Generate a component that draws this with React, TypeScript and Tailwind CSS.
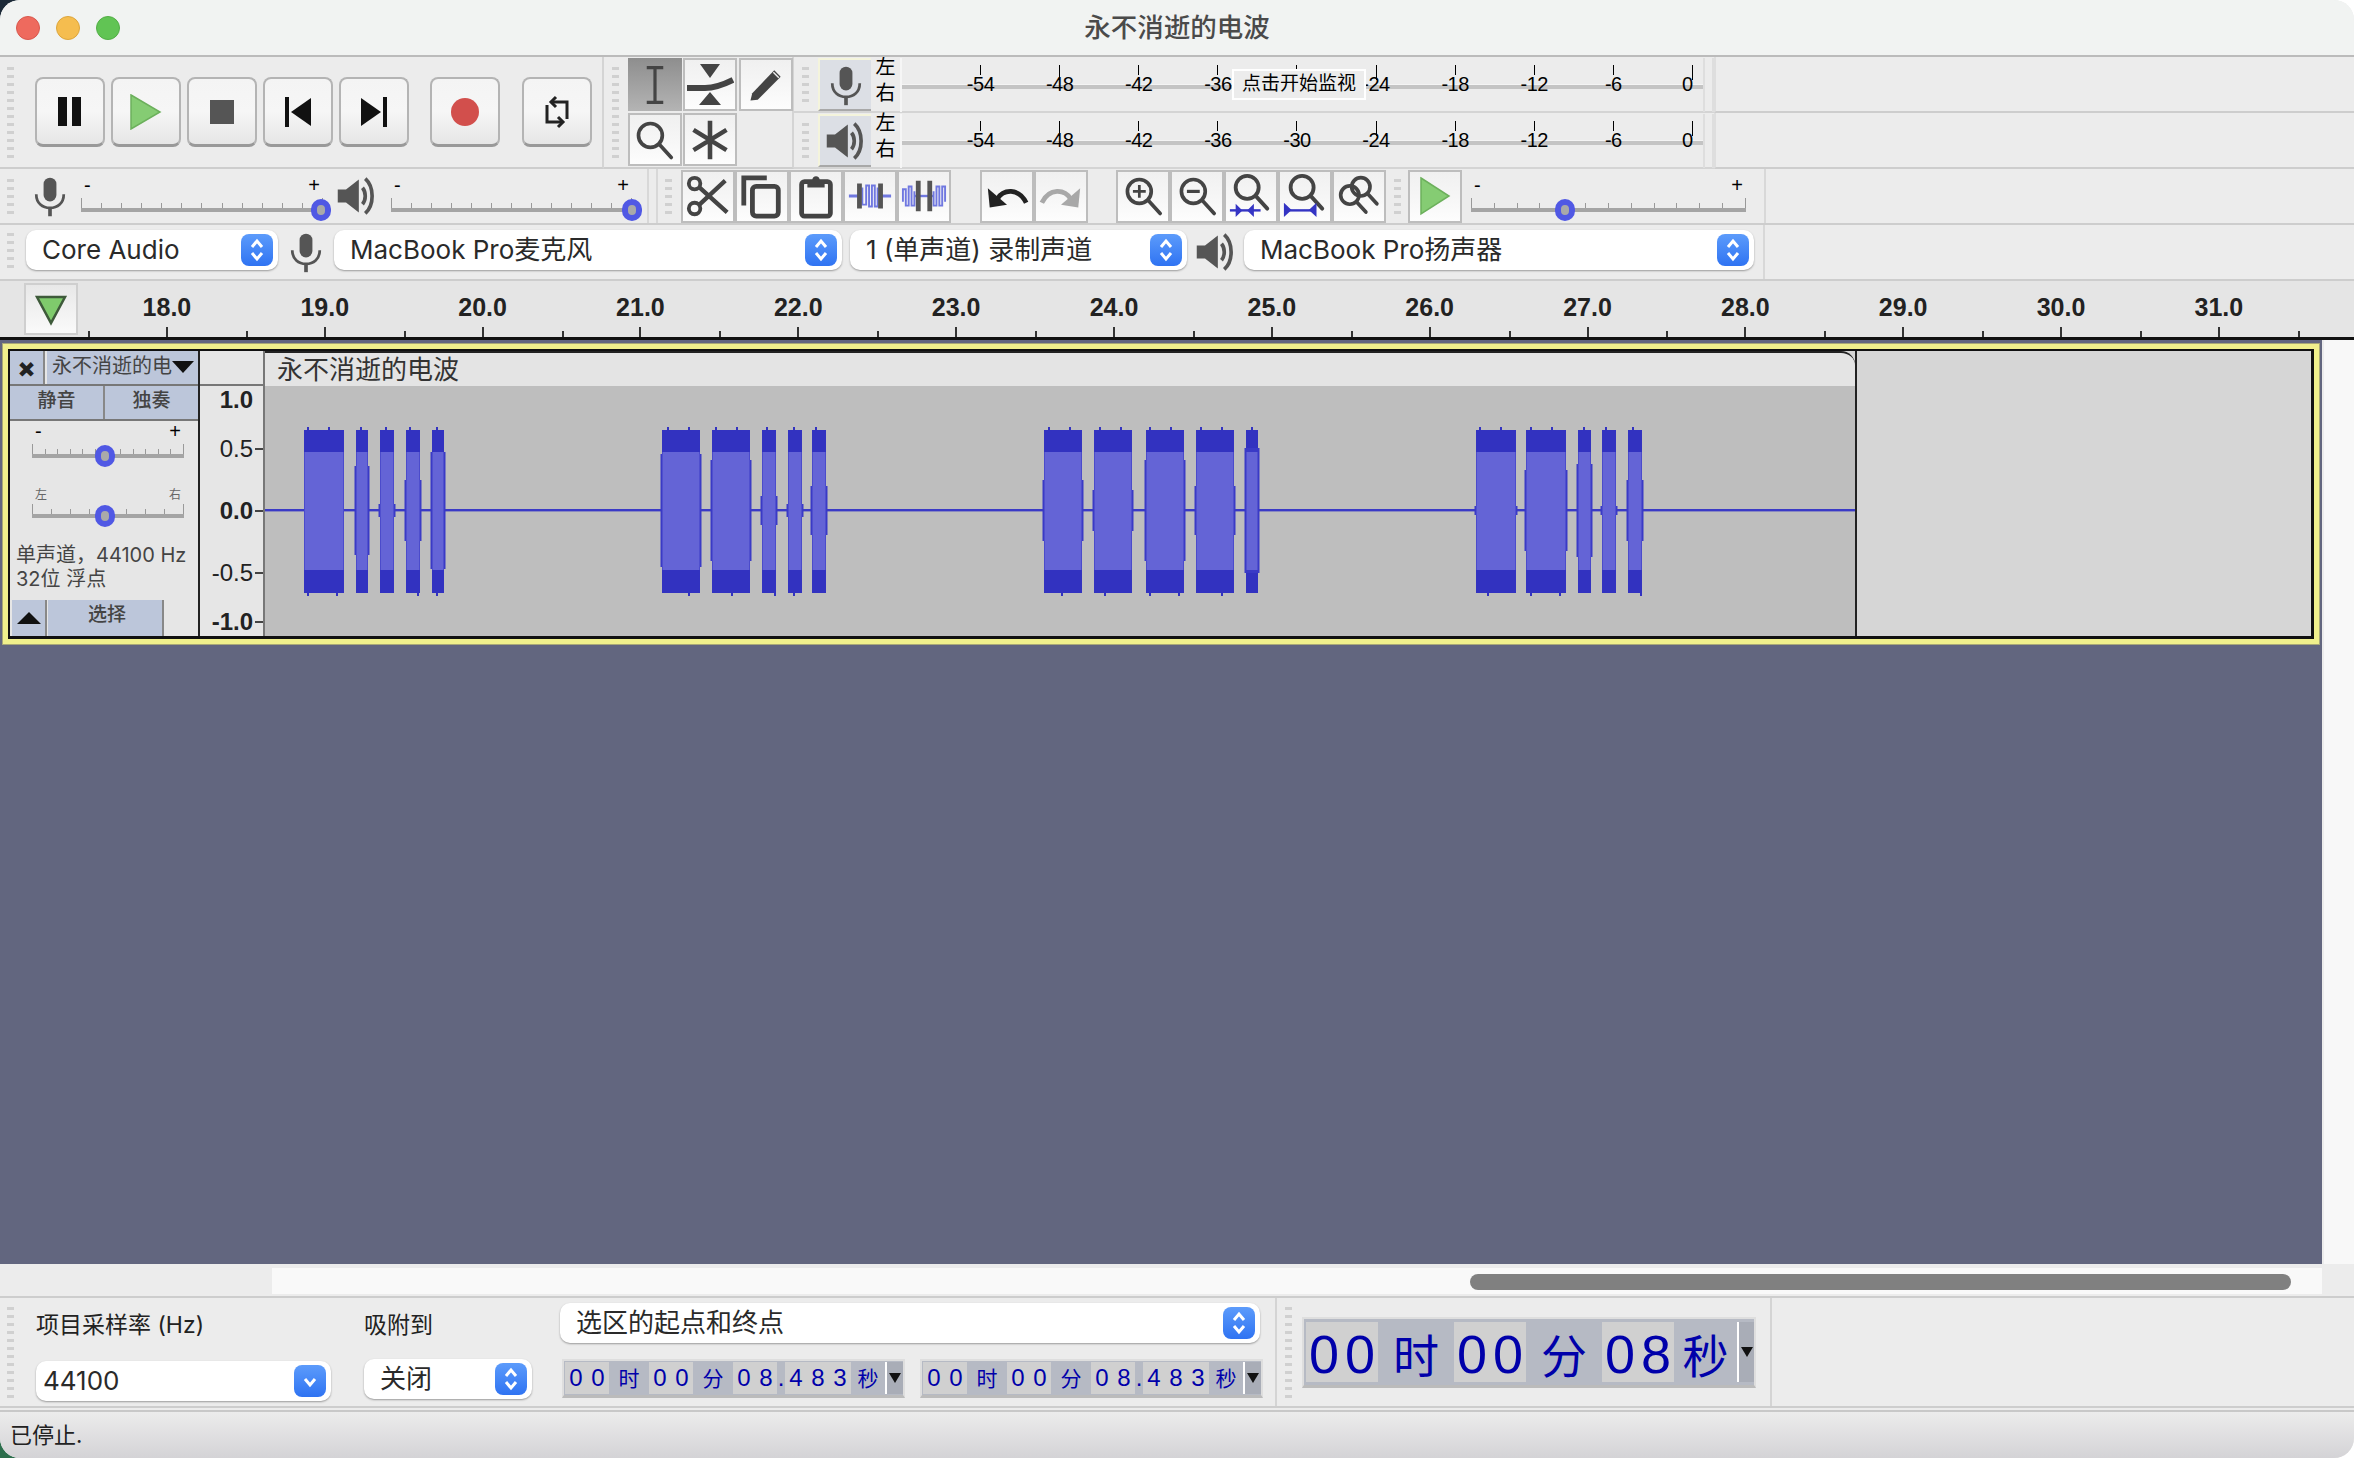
import type { ReactNode } from 'react'

const SANS = "font-['Inter','Noto_Sans_CJK_SC',sans-serif]"
const ARIAL = "font-['Liberation_Sans','Noto_Sans_CJK_SC',sans-serif]"

function Grip({ count }: { count: number }) {
  return (
    <div className="flex flex-col gap-[5px] shrink-0">
      {Array.from({ length: count }).map((_, i) => (
        <div key={i} className="w-[7px] h-[3px] bg-[#d0d0d0]" />
      ))}
    </div>
  )
}

function Icon({ size = 48, children }: { size?: number; children: ReactNode }) {
  return (
    <svg width={size} height={size} viewBox="0 0 48 48" fill="none">
      {children}
    </svg>
  )
}

const InkStroke = { stroke: '#444', strokeWidth: 4, strokeLinecap: 'round' as const }

function MicIcon() {
  return (
    <Icon size={44}>
      <rect x="17" y="4" width="14" height="26" rx="7" fill="#555" />
      <path d="M9 22c0 10 7 15 15 15s15-5 15-15" stroke="#555" strokeWidth="3" />
      <path d="M24 37v9" stroke="#555" strokeWidth="4" />
    </Icon>
  )
}

function SpeakerIcon() {
  return (
    <Icon size={44}>
      <path d="M3 17h9L26 6v36L12 31H3z" fill="#555" />
      <path d="M30 15c4 5 4 13 0 18" stroke="#555" strokeWidth="4" />
      <path d="M33 5c10 9 10 29 0 38" stroke="#555" strokeWidth="4" />
    </Icon>
  )
}

function ZoomGlass({ cx = 20, cy = 19, r = 13 }: { cx?: number; cy?: number; r?: number }) {
  return (
    <>
      <circle cx={cx} cy={cy} r={r} stroke="#444" strokeWidth="4" />
      <path d={`M${cx + r * 0.72} ${cy + r * 0.72}L${cx + r * 1.75} ${cy + r * 1.85}`} {...InkStroke} />
    </>
  )
}

function TransportButton({ children }: { children: ReactNode }) {
  return (
    <button className="w-[70px] h-[70px] shrink-0 flex items-center justify-center rounded-[8px] border-2 border-[#b4b4b4] border-b-[3px] border-b-[#999] bg-gradient-to-b from-[#f4f4f4] via-[#f6f6f6] to-[#e6e6e6]">
      {children}
    </button>
  )
}

function ToolButton({ active, children }: { active?: boolean; children: ReactNode }) {
  return (
    <button
      className={
        active
          ? 'w-[54px] h-[53px] shrink-0 flex items-center justify-center bg-gradient-to-b from-[#8e8e8e] to-[#b4b4b4]'
          : 'w-[54px] h-[53px] shrink-0 flex items-center justify-center border-2 border-[#bdbdbd] bg-gradient-to-b from-[#f0f0f0] via-[#f6f6f6] to-[#fdfdfd]'
      }
    >
      {children}
    </button>
  )
}

function Slider({ width, thumb, left = '-', right = '+', small }: { width: string; thumb: number; left?: string; right?: string; small?: boolean }) {
  return (
    <div className={`${width} shrink-0 flex flex-col`}>
      <div className={`flex justify-between px-[3px] ${small ? 'h-[18px] text-[12px] text-[#666]' : 'h-[22px] text-[20px] text-black'} leading-[18px] ${ARIAL}`}>
        <span>{left}</span>
        <span>{right}</span>
      </div>
      <div className="flex justify-between items-end h-[10px]">
        {Array.from({ length: small ? 9 : 13 }).map((_, i, all) => (
          <div key={i} className={`w-[1px] bg-[#999] ${i === 0 || i === all.length - 1 ? 'h-[10px]' : 'h-[5px]'}`} />
        ))}
      </div>
      <div className="relative h-[4px] bg-[#a4a4a4]">
        <div
          className="absolute top-[-9px] w-[20px] h-[22px] -ml-[10px] rounded-full border-[6px] border-[#5058e4] bg-[#a9a9a9]"
          style={{ left: `${thumb}%` }}
        />
      </div>
    </div>
  )
}

function Select({ width, label, single, className = '' }: { width: string; label: string; single?: boolean; className?: string }) {
  return (
    <div className={`${width} ${className} ${single ? 'pl-[7px]' : 'pl-[16px]'} h-[40px] shrink-0 flex items-center justify-between pr-[5px] rounded-[10px] bg-white shadow-[0_1px_2px_rgba(0,0,0,0.35)]`}>
      <span className={`${SANS} text-[26px] text-[#2a2a2a] whitespace-nowrap leading-none`}>{label}</span>
      <span className="w-[32px] h-[32px] flex items-center justify-center rounded-[8px] bg-gradient-to-b from-[#5c9bfb] to-[#2f73f2]">
        <svg width="18" height="26" viewBox="0 0 18 26" fill="none" stroke="white" strokeWidth="3">
          {!single && <path d="M4 10l5-6 5 6" />}
          <path d={single ? 'M4 11l5 6 5-6' : 'M4 16l5 6 5-6'} />
        </svg>
      </span>
    </div>
  )
}

function Meter({ icon, hint }: { icon: ReactNode; hint?: boolean }) {
  const ticks = ['-54', '-48', '-42', '-36', '-30', '-24', '-18', '-12', '-6', '0']
  return (
    <div className="h-[56px] flex items-start pt-[1px] border-b-2 border-[#d4d4d4] box-border">
      <div className="w-[24px] pl-[8px] pt-[9px]">
        <Grip count={5} />
      </div>
      <div className="w-[53px] h-[53px] flex items-center justify-center bg-[#dcdfe5] border-t-2 border-l-2 border-[#f4f4dc] border-b-2 border-b-[#a8a8a8]">
        {icon}
      </div>
      <div className={`w-[29px] -mt-[1px] flex flex-col items-center gap-[6px] text-[20px] leading-[20px] text-black ${SANS}`}>
        <span>左</span>
        <span>右</span>
      </div>
      <div className="relative w-[803px] h-[54px] border-l-2 border-[#f6f6f6] pl-[39px] flex overflow-hidden">
        <div className="absolute left-0 right-0 top-[26px] h-[5px] bg-[#c4c4c4] border-t border-[#f4f4f4]" />
        {ticks.map(t => {
          const long = t === '-48' || t === '-24' || t === '0'
          return (
            <div key={t} className={`relative w-[79.1px] shrink-0 flex flex-col items-center pt-[7px] ${ARIAL}`}>
              <div className={`w-[1px] bg-black ${long ? 'h-[15px]' : 'h-[10px]'}`} />
              {!(hint && t === '-30') && (
                <span className={`${long ? '-mt-[6px]' : '-mt-[1px]'} ${t === '0' ? '-ml-[10px]' : ''} text-[20px] leading-[20px] text-black tracking-[-0.5px]`}>{t}</span>
              )}
            </div>
          )
        })}
        {hint && (
          <div className={`absolute left-[330px] top-[11px] w-[134px] h-[31px] flex items-center justify-center border-2 border-white bg-[#ececec] text-[19px] text-black ${SANS}`}>
            点击开始监视
          </div>
        )}
      </div>
      <div className="w-[11px] h-[54px] border-x-2 border-[#dedede]" />
    </div>
  )
}

function Ruler() {
  const seconds = Array.from({ length: 14 }, (_, i) => 18 + i)
  return (
    <div className="h-[59px] shrink-0 flex bg-[#e5e5e5] border-b-[3px] border-[#111] pl-[24px] overflow-hidden">
      <div className="w-[54px] h-[52px] mt-[2px] flex items-center justify-center border-2 border-[#cfcfcf] bg-gradient-to-b from-[#e8e8e8] to-[#fafafa]">
        <svg width="34" height="34" viewBox="0 0 34 34">
          <path d="M3 5h28L17 31z" fill="#7fcb6c" stroke="#3e5a3a" strokeWidth="2.5" />
        </svg>
      </div>
      <div className="ml-[10px] flex">
        {seconds.map(s => (
          <div key={s} className="relative w-[157.85px] shrink-0 flex flex-col items-center justify-end">
            <div className="absolute left-0 bottom-0 w-[2px] h-[6px] bg-[#333]" />
            <span className={`${ARIAL} font-bold text-[25px] leading-none text-[#222] mb-[7px]`}>{s}.0</span>
            <div className="w-[2px] h-[10px] bg-[#333]" />
          </div>
        ))}
        <div className="relative w-[2px] shrink-0">
          <div className="absolute left-0 bottom-0 w-[2px] h-[6px] bg-[#333]" />
        </div>
      </div>
    </div>
  )
}

// x start, x end, how far the side fringes reach above/below the centre line
const BLOCKS: [number, number, number][] = [
  [304, 344, 0], [356, 368, 44], [380, 394, 6], [406, 420, 30], [432, 444, 58],
  [662, 700, 56], [712, 750, 50], [762, 776, 14], [788, 802, 6], [812, 826, 24],
  [1044, 1082, 30], [1094, 1132, 20], [1146, 1184, 50], [1196, 1234, 24], [1246, 1258, 62],
  [1476, 1516, 4], [1526, 1566, 40], [1578, 1591, 46], [1602, 1616, 4], [1628, 1642, 30],
]

function Waveform() {
  return (
    <svg width="1590" height="250" viewBox="265 386 1590 250" className="block">
      <rect x="265" y="386" width="1590" height="250" fill="#bebebe" />
      <rect x="265" y="509" width="1590" height="2.4" fill="#3a3ac6" />
      {BLOCKS.map(([a, b, fringe], i) => {
        const w = b - a
        const notches = Array.from({ length: Math.floor(w / 7) }, (_, n) => a + 3 + n * 7 + ((i + n) % 3))
        return (
          <g key={a}>
            <rect x={a} y="430" width={w} height="163" fill="#3232c0" />
            {notches.map((x, n) =>
              (i * 3 + n) % 3 === 0 ? <rect key={n} x={x} y={427} width="2" height="4" fill="#3232c0" /> : null,
            )}
            {notches.map((x, n) =>
              (i * 5 + n) % 4 === 0 ? <rect key={n} x={x} y={592} width="2" height="4" fill="#3232c0" /> : null,
            )}
            <rect x={a - 1.5} y={510 - fringe} width={w + 3} height={fringe * 2 + 1} fill="#3a3ac6" />
            <rect x={a + 0.5} y="452" width={w - 1} height="118" fill="#6464d6" />
          </g>
        )
      })}
    </svg>
  )
}

function TrackPanel() {
  const blueBtn = 'bg-[#bcc6da] flex items-center justify-center'
  return (
    <div className={`w-[190px] shrink-0 flex flex-col bg-[#e6e6e6] border-r-2 border-[#222] ${SANS}`}>
      <div className="h-[35px] flex border-b-2 border-[#777]">
        <div className={`w-[35px] ${blueBtn} border-r-2 border-[#888] text-[26px] font-black text-[#222] leading-none`}>×</div>
        <div className={`flex-1 ml-[2px] ${blueBtn} justify-between pl-[2px] pr-[1px] text-[20px] text-[#444]`}>
          <span className="whitespace-nowrap pb-[4px]">永不消逝的电</span>
          <svg width="22" height="13" viewBox="0 0 22 13"><path d="M0 0h22L11 12z" fill="#111" /></svg>
        </div>
      </div>
      <div className="h-[35px] flex border-b-2 border-[#777] text-[19px] font-medium text-[#444]">
        <div className={`w-[95px] ${blueBtn} border-r-2 border-[#888] pb-[2px]`}>静音</div>
        <div className={`flex-1 ${blueBtn} pb-[2px]`}>独奏</div>
      </div>
      <div className="flex-1 flex flex-col">
        <div className="mt-[1px] ml-[22px]">
          <Slider width="w-[152px]" thumb={48} />
        </div>
        <div className="mt-[28px] ml-[22px]">
          <Slider width="w-[152px]" thumb={48} left="左" right="右" small />
        </div>
        <div className="mt-[25px] ml-[6px] text-[20px] leading-[24px] text-[#444] whitespace-nowrap">
          <div>单声道，44100 Hz</div>
          <div>32位 浮点</div>
        </div>
      </div>
      <div className="h-[36px] flex border-t-0">
        <div className={`w-[35px] ml-[2px] ${blueBtn} border-r-2 border-[#888]`}>
          <svg width="24" height="12" viewBox="0 0 24 12"><path d="M12 0l12 12H0z" fill="#111" /></svg>
        </div>
        <div className={`w-[116px] ml-[1px] ${blueBtn} border-r-2 border-[#888] pb-[6px] pl-[4px] text-[19px] font-medium text-[#444]`}>选择</div>
      </div>
    </div>
  )
}

function Track() {
  const Scale = ({ label, tick, bold, className = '' }: { label: string; tick?: boolean; bold?: boolean; className?: string }) => (
    <div className={`h-[24px] flex items-center justify-end ${className}`}>
      <span className={`${ARIAL} text-[24px] leading-none text-[#222] ${bold ? 'font-bold' : ''}`}>{label}</span>
      <div className={`ml-[2px] w-[8px] h-[2px] ${tick ? 'bg-[#444]' : ''}`} />
    </div>
  )
  return (
    <div className="mt-[4px] mx-[3px] h-[300px] box-border border-[5px] border-[#f0f08c] shadow-[0_0_0_1px_#a8a878]">
      <div className="h-[290px] box-border flex border-[2px] border-b-[3px] border-r-[3px] border-[#111] bg-[#d6d6d6]">
        <TrackPanel />
        <div className="w-[65px] shrink-0 bg-[#e6e6e6] border-r-2 border-[#777]">
          <div className="h-[35px] border-b-2 border-[#777]" />
          <Scale label="1.0" bold className="mt-[2px]" />
          <Scale label="0.5" tick className="mt-[25px]" />
          <Scale label="0.0" tick bold className="mt-[38px]" />
          <Scale label="-0.5" tick className="mt-[38px]" />
          <Scale label="-1.0" tick bold className="mt-[25px]" />
        </div>
        <div className="w-[1592px] shrink-0 flex flex-col border-r-2 border-[#222]">
          <div className={`h-[35px] flex items-center pl-[12px] bg-[#e4e4e4] border-t-2 border-[#222] rounded-tr-[14px] text-[26px] text-[#333] ${SANS}`}>
            永不消逝的电波
          </div>
          <Waveform />
        </div>
        <div className="flex-1" />
      </div>
    </div>
  )
}

function Clock({ big }: { big?: boolean }) {
  const groups: [string, string][] = big
    ? [['00', '时'], ['00', '分'], ['08', '秒']]
    : [['00', '时'], ['00', '分'], ['08.483', '秒']]
  return (
    <div className={`flex shrink-0 bg-[#b6bac4] border-2 border-[#dedede] border-b-[3px] border-b-[#bbb] ${big ? 'w-[454px] h-[71px] py-[3px] pl-[2px]' : 'w-[343px] h-[39px] py-[1px] pl-[1px]'} ${ARIAL} text-[#0000aa]`}>
      {groups.map(([digits, unit]) => (
        <div key={unit} className="flex">
          <div className="flex items-center">
            {digits.split('').map((d, i) =>
              d === '.' ? (
                <span key={i} className="w-[8px] text-center text-[24px] leading-none">.</span>
              ) : (
                <span
                  key={i}
                  className={`h-full flex items-center justify-center bg-[#d0d0d0] ${big ? 'w-[36px] text-[54px] pt-[4px]' : 'w-[22px] text-[24px]'} leading-none`}
                >
                  {d}
                </span>
              ),
            )}
          </div>
          <div
            className={`flex items-center justify-center ${SANS} leading-none ${
              big
                ? unit === '秒' ? 'w-[63px] text-[46px] pt-[8px]' : 'w-[76px] text-[46px] pt-[8px]'
                : unit === '秒' ? 'w-[34px] text-[21px]' : 'w-[40px] text-[21px]'
            }`}
          >
            {unit}
          </div>
        </div>
      ))}
      <div className={`ml-auto flex items-center justify-center bg-[#a9adb7] border-l-2 border-white ${big ? 'w-[17px]' : 'w-[18px]'}`}>
        <svg width="12" height="10" viewBox="0 0 12 10"><path d="M0 0h12L6 10z" fill="#111" /></svg>
      </div>
    </div>
  )
}

export default function App() {
  return (
    <div className="relative w-[2354px] h-[1458px] overflow-hidden bg-white">
      {/* desktop showing through the window corners */}
      <div className="absolute left-0 top-0 w-[20px] h-[20px] bg-[#1c2a38]" />
      <div className="absolute left-0 bottom-0 w-[20px] h-[20px] bg-[#2c6e4c]" />

      <div className={`relative h-full flex flex-col rounded-[20px] overflow-hidden bg-[#ececec] ${SANS}`}>
        {/* Title bar */}
        <div className="h-[57px] shrink-0 relative flex items-center justify-center bg-[#f1f3f2] border-b-2 border-[#bbb]">
          <div className="absolute left-[16px] top-[16px] flex gap-[16px]">
            <span className="w-[24px] h-[24px] rounded-full bg-[#ee6a5e] border border-[#d8584e]" />
            <span className="w-[24px] h-[24px] rounded-full bg-[#f5bd4f] border border-[#dca53c]" />
            <span className="w-[24px] h-[24px] rounded-full bg-[#61c454] border border-[#52ae46]" />
          </div>
          <span className="text-[26.5px] text-[#4a4a4a] font-medium">永不消逝的电波</span>
        </div>

        {/* Transport, tools, meters */}
        <div className="h-[112px] shrink-0 flex">
          <div className="w-[604px] shrink-0 flex items-center border-r-2 border-[#d4d4d4] border-b-2 border-b-[#cdcdcd] pl-[7px]">
            <Grip count={12} />
            <div className="ml-[21px] flex gap-[6px]">
              <TransportButton>
                <svg width="26" height="30" viewBox="0 0 26 30"><rect x="1" y="0" width="9" height="29" fill="#111" /><rect x="15" y="0" width="9" height="29" fill="#111" /></svg>
              </TransportButton>
              <TransportButton>
                <svg width="32" height="36" viewBox="0 0 32 36"><path d="M1 1l29 17L1 35z" fill="#85cc73" stroke="#6cb05c" strokeWidth="1.5" /></svg>
              </TransportButton>
              <TransportButton>
                <div className="w-[24px] h-[24px] bg-[#555]" />
              </TransportButton>
              <TransportButton>
                <svg width="28" height="30" viewBox="0 0 28 30"><rect x="1" y="0" width="4" height="30" fill="#111" /><path d="M27 1v28L7 15z" fill="#111" /></svg>
              </TransportButton>
              <TransportButton>
                <svg width="28" height="30" viewBox="0 0 28 30"><rect x="23" y="0" width="4" height="30" fill="#111" /><path d="M1 1v28l20-14z" fill="#111" /></svg>
              </TransportButton>
            </div>
            <div className="ml-[21px]">
              <TransportButton>
                <div className="w-[28px] h-[28px] rounded-full bg-[#d24f4c]" />
              </TransportButton>
            </div>
            <div className="ml-[22px]">
              <TransportButton>
                <svg width="32" height="34" viewBox="0 0 32 34" fill="none" stroke="#222" strokeWidth="3">
                  <path d="M26 24V7H11" />
                  <path d="M6 10v17h15" />
                  <path d="M15 2l-5 5 5 5" />
                  <path d="M17 22l5 5-5 5" />
                </svg>
              </TransportButton>
            </div>
          </div>

          <div className="w-[190px] shrink-0 flex items-center border-r-2 border-[#d4d4d4] border-b-2 border-b-[#cdcdcd] pl-[8px]">
            <Grip count={12} />
            <div className="ml-[9px] grid grid-cols-3 gap-[2px] w-[166px]">
              <ToolButton active>
                <Icon size={44}><path d="M15 5h18M15 43h18M24 5v38" stroke="#444" strokeWidth="3.5" /></Icon>
              </ToolButton>
              <ToolButton>
                <Icon size={48}>
                  <path d="M14 3h20L24 17zM24 31l11 13H13z" fill="#444" />
                  <path d="M1 27h18c10 0 18-3 28-8" stroke="#444" strokeWidth="6" />
                </Icon>
              </ToolButton>
              <ToolButton>
                <Icon size={44}>
                  <path d="M9 33L33 8l7 7-25 25-8 1z" fill="#444" />
                  <path d="M32 10l6 6" stroke="#f0f0f0" strokeWidth="1.5" />
                </Icon>
              </ToolButton>
              <ToolButton>
                <Icon size={44}><ZoomGlass cx={19} cy={19} r={13} /></Icon>
              </ToolButton>
              <ToolButton>
                <Icon size={44}><path d="M24 3v42M6 13l36 22M42 13L6 35" stroke="#444" strokeWidth="5" /></Icon>
              </ToolButton>
            </div>
          </div>

          <div className="w-[920px] shrink-0">
            <Meter icon={<MicIcon />} hint />
            <Meter icon={<SpeakerIcon />} />
          </div>

          <div className="flex-1 flex flex-col">
            <div className="h-[56px] border-b-2 border-[#cdcdcd] border-l-2 border-l-[#dedede]" />
            <div className="h-[56px] border-b-2 border-[#cdcdcd] border-l-2 border-l-[#dedede]" />
          </div>
        </div>

        {/* Mixer, edit, zoom, play-at-speed */}
        <div className="h-[56px] shrink-0 flex items-center border-b-2 border-[#cdcdcd]">
          <div className="w-[649px] h-full shrink-0 flex items-center pl-[7px] border-r-2 border-[#d8d8d8]">
            <Grip count={5} />
            <div className="ml-[14px]"><MicIcon /></div>
            <div className="ml-[9px] -mt-[5px]"><Slider width="w-[242px]" thumb={99} /></div>
            <div className="ml-[12px]"><SpeakerIcon /></div>
            <div className="ml-[12px] -mt-[5px]"><Slider width="w-[241px]" thumb={100} /></div>
          </div>
          <div className="w-[7px] shrink-0" />
          <div className="h-full shrink-0 flex items-center pl-[7px] border-l-2 border-[#d8d8d8]">
            <Grip count={5} />
            <div className="ml-[9px] flex">
              <ToolButton>
                <Icon size={46}>
                  <circle cx="10" cy="11" r="6" stroke="#444" strokeWidth="4" />
                  <circle cx="10" cy="37" r="6" stroke="#444" strokeWidth="4" />
                  <path d="M15 15l29 26M15 33L42 8" stroke="#444" strokeWidth="4.5" />
                </Icon>
              </ToolButton>
              <ToolButton>
                <Icon size={46}>
                  <path d="M5 34V5h24" stroke="#444" strokeWidth="5" />
                  <rect x="14" y="14" width="27" height="31" rx="4" stroke="#444" strokeWidth="5" />
                </Icon>
              </ToolButton>
              <ToolButton>
                <Icon size={46}>
                  <rect x="9" y="9" width="30" height="36" rx="3" stroke="#444" strokeWidth="5" />
                  <path d="M15 8h5c0-6 8-6 8 0h5v7H15z" fill="#444" />
                </Icon>
              </ToolButton>
              <ToolButton>
                <Icon size={46}>
                  <path d="M2 24h10M36 24h10" stroke="#7078e0" strokeWidth="3" />
                  <path d="M16 15v18h4V13h3v22h3V13h3v22h3V15" stroke="#7078e0" strokeWidth="2" />
                  <path d="M13 11v26M35 11v26" stroke="#555" strokeWidth="5" />
                </Icon>
              </ToolButton>
              <ToolButton>
                <Icon size={46}>
                  <path d="M2 30V17h3v17h3V14h3v20h3V19" stroke="#7078e0" strokeWidth="2" />
                  <path d="M34 19v15h3V14h3v20h3V14h3v16" stroke="#7078e0" strokeWidth="2" />
                  <path d="M14 24h20" stroke="#7078e0" strokeWidth="2.5" />
                  <path d="M18 8v32M30 8v32" stroke="#555" strokeWidth="5" />
                </Icon>
              </ToolButton>
            </div>
            <div className="ml-[29px] flex">
              <ToolButton>
                <Icon size={46}>
                  <path d="M14 27c6-10 22-12 30 4" stroke="#222" strokeWidth="5" />
                  <path d="M4 16l2 20 18-3z" fill="#222" />
                </Icon>
              </ToolButton>
              <ToolButton>
                <Icon size={46}>
                  <path d="M34 27c-6-10-22-12-30 4" stroke="#a8a8a8" strokeWidth="5" />
                  <path d="M44 16l-2 20-18-3z" fill="#a8a8a8" />
                </Icon>
              </ToolButton>
            </div>
            <div className="ml-[28px] flex">
              <ToolButton>
                <Icon size={44}><ZoomGlass /><path d="M20 12v14M13 19h14" stroke="#444" strokeWidth="3" /></Icon>
              </ToolButton>
              <ToolButton>
                <Icon size={44}><ZoomGlass /><path d="M13 19h14" stroke="#444" strokeWidth="3.5" /></Icon>
              </ToolButton>
              <ToolButton>
                <Icon size={46}>
                  <ZoomGlass cx={20} cy={15} r={12} />
                  <path d="M2 39h32" stroke="#3434c4" strokeWidth="2.5" />
                  <path d="M8 32l7 7-7 7zM27 32l-7 7 7 7z" fill="#3434c4" />
                </Icon>
              </ToolButton>
              <ToolButton>
                <Icon size={46}>
                  <ZoomGlass cx={21} cy={15} r={12} />
                  <path d="M4 39h30" stroke="#3434c4" strokeWidth="2.5" />
                  <path d="M2 31v15l8-7.5zM36 31v15l-8-7.5z" fill="#3434c4" />
                </Icon>
              </ToolButton>
              <ToolButton>
                <Icon size={44}>
                  <ZoomGlass cx={26} cy={14} r={10} />
                  <ZoomGlass cx={14} cy={23} r={10} />
                </Icon>
              </ToolButton>
            </div>
            <div className="ml-[8px]"><Grip count={5} /></div>
            <div className="ml-[7px]">
              <ToolButton>
                <svg width="32" height="40" viewBox="0 0 32 40"><path d="M2 2l28 18L2 38z" fill="#85cc73" stroke="#6cb05c" strokeWidth="1.5" /></svg>
              </ToolButton>
            </div>
            <div className="ml-[9px] -mt-[5px] mr-[18px]"><Slider width="w-[275px]" thumb={34} /></div>
          </div>
          <div className="flex-1 h-full border-l-2 border-[#d8d8d8]" />
        </div>

        {/* Device selectors */}
        <div className="h-[56px] shrink-0 flex items-start pt-[5px] border-b-2 border-[#cdcdcd] pl-[7px]">
          <div className="pt-[3px]"><Grip count={5} /></div>
          <Select width="w-[252px]" label="Core Audio" className="ml-[12px]" />
          <div className="w-[56px] flex justify-center"><MicIcon /></div>
          <Select width="w-[508px]" label="MacBook Pro麦克风" />
          <Select width="w-[337px]" label="1 (单声道) 录制声道" className="ml-[8px]" />
          <div className="w-[57px] flex justify-center"><SpeakerIcon /></div>
          <Select width="w-[510px]" label="MacBook Pro扬声器" />
          <div className="ml-[9px] -mt-[5px] h-[54px] flex-1 border-l-2 border-[#d8d8d8]" />
        </div>

        {/* Timeline and tracks */}
        <Ruler />
        <div className="h-[924px] shrink-0 flex">
          <div className="w-[2322px] shrink-0 flex flex-col bg-[#62667f]">
            <Track />
          </div>
          <div className="flex-1 bg-[#f8f8f8] border-l-2 border-[#ececec]" />
        </div>

        {/* Horizontal scrollbar */}
        <div className="h-[32px] shrink-0 flex items-start pt-[4px] pr-[32px] bg-[#ececec]">
          <div className="ml-[272px] flex-1 h-[26px] bg-[#f9f9f9] pt-[6px] pl-[1198px] pr-[31px]">
            <div className="h-[16px] rounded-full bg-[#808080]" />
          </div>
        </div>

        {/* Selection toolbar */}
        <div className="h-[112px] shrink-0 flex border-y-2 border-[#cdcdcd]">
          <div className="w-[1277px] shrink-0 flex items-center pl-[7px] border-r-2 border-[#d4d4d4]">
            <Grip count={12} />
            <div className="ml-[22px] mt-[8px] w-[328px] flex flex-col gap-[23px]">
              <div className="text-[23px] leading-[26px] text-[#222]">项目采样率 (Hz)</div>
              <Select width="w-[295px]" label="44100" single />
            </div>
            <div className="w-[196px] mt-[6px] flex flex-col gap-[21px]">
              <div className="text-[23px] leading-[26px] text-[#222]">吸附到</div>
              <Select width="w-[168px]" label="关闭" />
            </div>
            <div className="-mt-[3px] flex flex-col gap-[16px]">
              <Select width="w-[700px]" label="选区的起点和终点" />
              <div className="flex gap-[15px] ml-[2px]">
                <Clock />
                <Clock />
              </div>
            </div>
          </div>
          <div className="w-[495px] shrink-0 flex items-center pl-[8px] border-r-2 border-[#d4d4d4]">
            <Grip count={12} />
            <div className="ml-[10px]"><Clock big /></div>
          </div>
          <div className="flex-1" />
        </div>

        {/* Status bar */}
        <div className="flex-1 flex items-center pl-[10px] mt-[2px] border-t-2 border-[#c8c8c8] bg-gradient-to-b from-[#ececec] to-[#d4d3d6] text-[22px] text-[#222]">
          已停止.
        </div>
      </div>
    </div>
  )
}
